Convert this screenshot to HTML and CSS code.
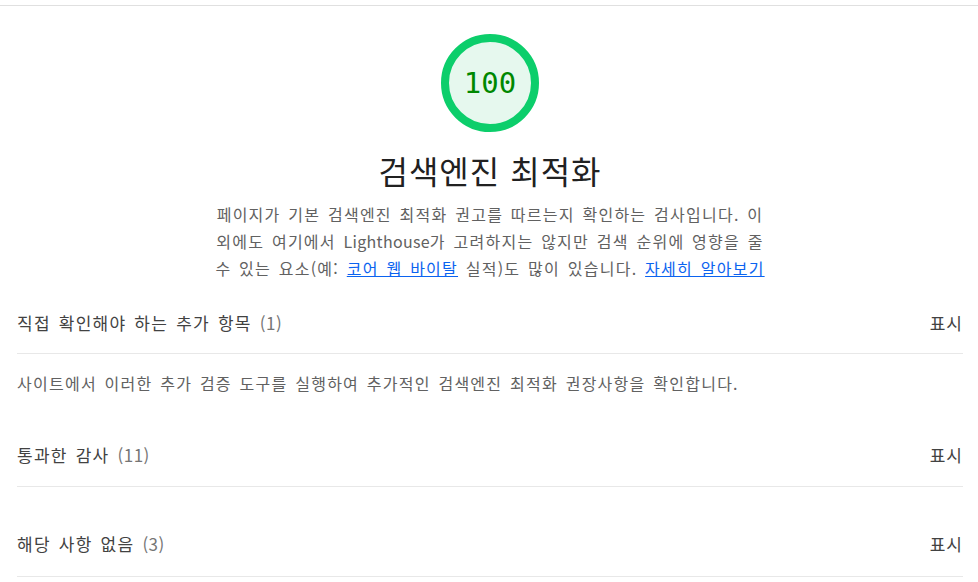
FILE: index.html
```html
<!DOCTYPE html>
<html lang="ko">
<head>
<meta charset="utf-8">
<link rel="stylesheet" href="styles.css">
</head>
<body>
<div class="category">
  <div class="header">
    <div class="gauge">
      <svg class="gauge-svg" width="100" height="100" viewBox="0 0 100 100">
        <circle cx="50" cy="50" r="45" fill="#e6f8ee" stroke="#0cce6b" stroke-width="8"/>
      </svg>
      <span class="gauge-value">100</span>
    </div>
    <h1 class="title">검색엔진 최적화</h1>
    <p class="desc">페이지가 기본 검색엔진 최적화 권고를 따르는지 확인하는 검사입니다. 이<br>외에도 여기에서 <span class="latin">Lighthouse</span>가 고려하지는 않지만 검색 순위에 영향을 줄<br>수 있는 요소(예: <a href="#">코어 웹 바이탈</a> 실적)도 많이 있습니다. <a href="#">자세히 알아보기</a></p>
  </div>
  <div class="group first">
    <div class="group-row">
      <span class="group-name">직접 확인해야 하는 추가 항목 <span class="count">(1)</span></span>
      <span class="toggle">표시</span>
    </div>
  </div>
  <p class="group-desc">사이트에서 이러한 추가 검증 도구를 실행하여 추가적인 검색엔진 최적화 권장사항을 확인합니다.</p>
  <div class="group second">
    <div class="group-row">
      <span class="group-name">통과한 감사 <span class="count">(11)</span></span>
      <span class="toggle">표시</span>
    </div>
  </div>
  <div class="group third">
    <div class="group-row">
      <span class="group-name">해당 사항 없음 <span class="count">(3)</span></span>
      <span class="toggle">표시</span>
    </div>
  </div>
</div>
</body>
</html>
```

FILE: styles.css
```css
html, body {
  margin: 0;
  padding: 0;
  background: #ffffff;
}
body {
  font-family: "Noto Sans CJK KR", "Noto Sans", sans-serif;
  color: #212121;
}
.category {
  margin-top: 5px;
  border-top: 1px solid #e0e0e0;
  padding: 0 15px 0 17px;
}
.header {
  display: flex;
  flex-direction: column;
  align-items: center;
}
.gauge {
  position: relative;
  width: 100px;
  height: 100px;
  margin-top: 27px;
}
.gauge-svg {
  display: block;
}
.gauge-value {
  position: absolute;
  inset: 0;
  display: flex;
  align-items: center;
  justify-content: center;
  font-family: "DejaVu Sans Mono", "Liberation Mono", monospace;
  font-size: 29px;
  color: #008800;
}
.title {
  margin: 17px 0 0;
  font-size: 32px;
  font-weight: 400;
  line-height: 40px;
  letter-spacing: 1px;
  color: #212121;
}
.desc {
  margin: 11px 0 0;
  text-align: center;
  white-space: nowrap;
  font-size: 16px;
  line-height: 27px;
  letter-spacing: 1.25px;
  word-spacing: 2px;
  color: #616161;
}
.latin {
  letter-spacing: 0.3px;
}
.desc a {
  color: #0b63f0;
  text-decoration: underline;
}
.group {
  border-bottom: 1px solid #e8e8e8;
}
.group-row {
  display: flex;
  justify-content: space-between;
  align-items: center;
  font-size: 17px;
  line-height: 24px;
  letter-spacing: 1.25px;
  word-spacing: 2px;
}
.group-name {
  color: #424242;
}
.count {
  color: #757575;
  letter-spacing: 0.5px;
}
.toggle {
  color: #424242;
  letter-spacing: 1px;
}
.first {
  margin-top: 29px;
}
.first .group-row {
  padding-bottom: 18px;
}
.group-desc {
  margin: 17px 0 0;
  font-size: 16px;
  line-height: 24px;
  letter-spacing: 1.25px;
  word-spacing: 2px;
  color: #616161;
}
.second {
  margin-top: 48px;
}
.second .group-row {
  padding-bottom: 19px;
}
.third {
  margin-top: 45px;
}
.third .group-row {
  padding-bottom: 20px;
}
```
